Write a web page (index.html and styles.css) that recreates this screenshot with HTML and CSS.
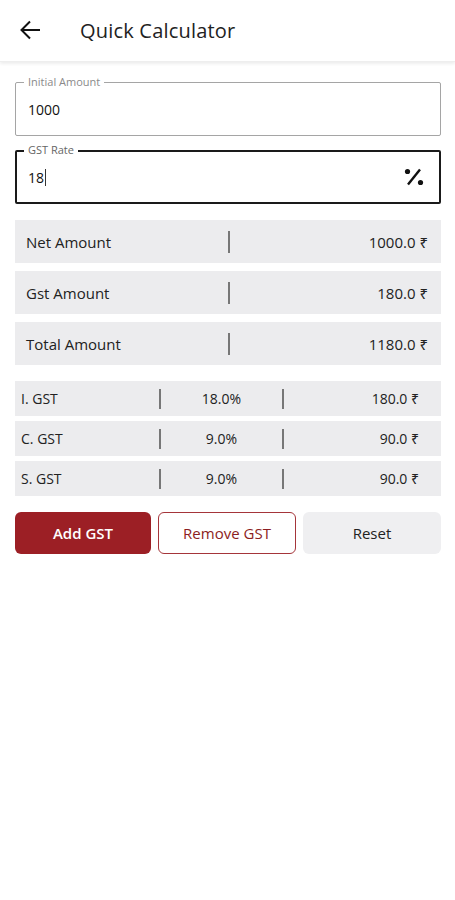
FILE: index.html
```html
<!DOCTYPE html>
<html>

<head>
    <meta charset="utf-8" />
    <title>Quick Calculator</title>
    <link rel="stylesheet" href="styles.css">
</head>

<body>
    <div class="topbar">
        <svg class="back" width="22" height="22" viewBox="0 0 22 22">
            <path d="M21 11H2.5M11 2.5L2.5 11L11 19.5" fill="none" stroke="#111" stroke-width="2" />
        </svg>
        <h1 class="title">Quick Calculator</h1>
    </div>

    <div class="content">
        <div class="field">
            <span class="field-label">Initial Amount</span>
            <span class="field-value">1000</span>
        </div>
        <div class="field field-active">
            <span class="field-label">GST Rate</span>
            <span class="field-value">18<span class="caret"></span></span>
            <svg class="percent" width="22" height="20" viewBox="0 0 22 20">
                <circle cx="4.5" cy="4.5" r="2.6" fill="#111" />
                <circle cx="17.5" cy="15.5" r="2.6" fill="#111" />
                <path d="M17 2.5L5 17.5" stroke="#111" stroke-width="2.4" />
            </svg>
        </div>

        <div class="totals">
            <div class="total-row">
                <span>Net Amount</span>
                <span class="bar"></span>
                <span class="amount">1000.0 ₹</span>
            </div>
            <div class="total-row">
                <span>Gst Amount</span>
                <span class="bar"></span>
                <span class="amount">180.0 ₹</span>
            </div>
            <div class="total-row">
                <span>Total Amount</span>
                <span class="bar"></span>
                <span class="amount">1180.0 ₹</span>
            </div>
        </div>

        <div class="split">
            <div class="split-row">
                <span>I. GST</span>
                <span class="bar"></span>
                <span class="rate">18.0%</span>
                <span class="bar"></span>
                <span class="amount">180.0 ₹</span>
            </div>
            <div class="split-row">
                <span>C. GST</span>
                <span class="bar"></span>
                <span class="rate">9.0%</span>
                <span class="bar"></span>
                <span class="amount">90.0 ₹</span>
            </div>
            <div class="split-row">
                <span>S. GST</span>
                <span class="bar"></span>
                <span class="rate">9.0%</span>
                <span class="bar"></span>
                <span class="amount">90.0 ₹</span>
            </div>
        </div>

        <div class="actions">
            <button class="btn btn-add">Add GST</button>
            <button class="btn btn-remove">Remove GST</button>
            <button class="btn btn-reset">Reset</button>
        </div>
    </div>
</body>

</html>
```

FILE: styles.css
```css
body {
    margin: 0;
    background: #fff;
    color: #222;
    font-family: "Open Sans", "Noto Sans", "DejaVu Sans", sans-serif;
}

/* barre du haut */
.topbar {
    height: 61px;
    display: flex;
    align-items: center;
    border-bottom: 1px solid #eee;
    box-shadow: 0 2px 3px rgba(0, 0, 0, 0.07);
}

.back {
    margin-left: 19px;
    margin-top: -2px;
}

.title {
    margin: 0 0 0 39px;
    font-size: 20px;
    font-weight: 400;
    color: #222;
    letter-spacing: 0.2px;
}

.content {
    padding: 20px 14px 0 15px;
}

/* champs de saisie */
.field {
    position: relative;
    height: 54px;
    box-sizing: border-box;
    border: 1px solid #a5a5a5;
    border-radius: 2px;
    display: flex;
    align-items: center;
    padding: 0 12px;
}

.field + .field {
    margin-top: 14px;
}

.field-active {
    border: 2px solid #1a1a1a;
    padding: 0 11px;
}

.field-label {
    position: absolute;
    top: -8px;
    left: 8px;
    padding: 0 4px;
    background: #fff;
    font-size: 11px;
    line-height: 14px;
    color: #8a8a8a;
}

.field-active .field-label {
    left: 7px;
    top: -9px;
    color: #666;
}

.field-value {
    font-size: 14px;
    color: #111;
    flex: 1;
}

.caret {
    display: inline-block;
    width: 1px;
    height: 17px;
    background: #333;
    vertical-align: -3px;
    margin-left: 1px;
}

.percent {
    margin-right: 3px;
}

/* montants */
.totals {
    margin-top: 16px;
    display: flex;
    flex-direction: column;
    gap: 8px;
}

.total-row {
    height: 43px;
    background: #ececee;
    display: grid;
    grid-template-columns: 202px 2px 1fr;
    align-items: center;
    padding: 0 13px 0 11px;
    font-size: 15px;
    color: #222;
}

.bar {
    width: 1.5px;
    height: 22px;
    background: #777;
}

.amount {
    text-align: right;
}

.split {
    margin-top: 16px;
    display: flex;
    flex-direction: column;
    gap: 5px;
}

.split-row {
    height: 35px;
    background: #ececee;
    display: grid;
    grid-template-columns: 138px 2px 121px 2px 1fr;
    align-items: center;
    padding: 0 22px 0 6px;
    font-size: 14px;
    color: #222;
}

.split-row .bar {
    height: 20px;
}

.rate {
    text-align: center;
}

/* boutons */
.actions {
    margin-top: 16px;
    display: grid;
    grid-template-columns: 136px 138px 1fr;
    gap: 7px;
}

.btn {
    height: 42px;
    border-radius: 6px;
    font-family: inherit;
    font-size: 15px;
    border: 1px solid transparent;
}

.btn-add {
    background: #9c1f25;
    color: #fff;
    font-weight: 600;
}

.btn-remove {
    background: #fff;
    border-color: #a5353a;
    color: #8c1d22;
}

.btn-reset {
    background: #efeff1;
    color: #222;
}
```
